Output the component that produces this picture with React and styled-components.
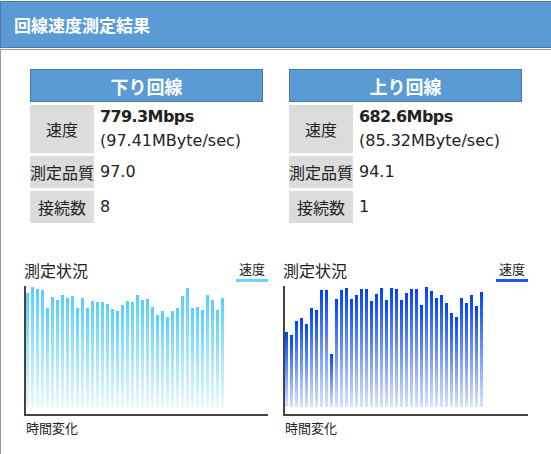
import styled, { createGlobalStyle } from 'styled-components';

const GlobalStyle = createGlobalStyle`
	html, body {
		margin: 0;
		padding: 0;
		background: #fff;
	}
	body {
		font-family: "DejaVu Sans", "Noto Sans CJK JP", sans-serif;
		color: #222;
		overflow: hidden;
	}
`;

//Header
const Header = styled.div`
	margin-top: 1px;
	height: 45px;
	display: flex;
	align-items: center;
	padding-left: 13px;
	background: #5b9bd5;
	border: 1px solid #4a78a8;
	border-right: none;
	color: #fff;
	font-family: "Noto Sans CJK JP", sans-serif;
	font-weight: 700;
	font-size: 17px;
`;

const Panel = styled.div`
	margin-top: 1px;
	border-top: 1px solid #999;
	border-left: 1px solid #999;
	padding: 19px 0 40px 23px;
	display: grid;
	grid-template-columns: 244px 245px;
	column-gap: 15px;
`;

const Column = styled.div`
	display: flex;
	flex-direction: column;
`;

//Result table
const Table = styled.div`
	margin-left: 6px;
	width: 233px;
	display: grid;
	grid-template-columns: 64px 1fr;
	grid-auto-rows: auto;
	gap: 3px;
`;

const TableHead = styled.div`
	grid-column: 1 / span 2;
	height: 31px;
	display: flex;
	justify-content: center;
	align-items: center;
	background: #5b9bd5;
	border: 1px solid #4a78a8;
	color: #fff;
	font-family: "Noto Sans CJK JP", sans-serif;
	font-weight: 700;
	font-size: 18px;
`;

const Label = styled.div`
	height: ${(p) => p.$h}px;
	display: flex;
	justify-content: center;
	align-items: center;
	background: #dcdcdc;
	font-family: "Noto Sans CJK JP", sans-serif;
	font-size: 16px;
	white-space: nowrap;
`;

const Value = styled.div`
	height: ${(p) => p.$h}px;
	display: flex;
	flex-direction: column;
	justify-content: center;
	padding-left: 3px;
	font-size: 16px;
	line-height: 24px;
	white-space: nowrap;
`;

const Strong = styled.span`
	font-weight: 700;
	letter-spacing: -0.6px;
`;

//Chart
const ChartHead = styled.div`
	margin-top: 33px;
	height: 30px;
	display: flex;
	justify-content: space-between;
	align-items: flex-start;
`;

const ChartTitle = styled.div`
	margin-top: 3px;
	font-family: "Noto Sans CJK JP", sans-serif;
	font-size: 16px;
	line-height: 22px;
`;

const Legend = styled.div`
	margin-top: 5px;
	padding: 0 3px 2px;
	border-bottom: 3px solid ${(p) => p.$color};
	font-family: "Noto Sans CJK JP", sans-serif;
	font-size: 13px;
	line-height: 16px;
`;

const Plot = styled.div`
	box-sizing: border-box;
	height: 130px;
	padding-bottom: 7px;
	border-left: 2px solid #444;
	border-bottom: 2px solid #444;
	display: flex;
	align-items: flex-end;
	gap: 2px;
`;

const Bar = styled.div`
	width: 3px;
	flex: none;
	background: linear-gradient(to bottom, ${(p) => p.$from}, ${(p) => p.$to});
`;

const AxisLabel = styled.div`
	margin-top: 4px;
	margin-left: 2px;
	font-family: "Noto Sans CJK JP", sans-serif;
	font-size: 13px;
	line-height: 16px;
`;

const BASE = 407;

const downTops = [293, 287, 289, 290, 308, 297, 300, 295, 298, 296, 308, 298, 308, 301, 302, 302, 304, 309, 311, 305,
	301, 302, 295, 300, 299, 307, 315, 311, 317, 311, 308, 296, 288, 308, 307, 310, 295, 300, 310, 298];

const upTops = [332, 335, 321, 318, 324, 308, 310, 290, 290, 354, 299, 290, 288, 299, 295, 289, 289, 301, 294, 288,
	300, 288, 289, 300, 293, 289, 289, 305, 287, 291, 298, 295, 303, 313, 317, 298, 303, 295, 306, 292];

const lines = [
	{
		title: '下り回線',
		mbps: '779.3Mbps',
		mbyte: '(97.41MByte/sec)',
		quality: '97.0',
		conns: '8',
		tops: downTops,
		legend: '#66d6fb',
		from: '#55d0fa',
		to: '#e9f9fe',
	},
	{
		title: '上り回線',
		mbps: '682.6Mbps',
		mbyte: '(85.32MByte/sec)',
		quality: '94.1',
		conns: '1',
		tops: upTops,
		legend: '#1f55f2',
		from: '#0040ff',
		to: '#d9e3ff',
	},
];

const Result = ({ line }) => (
	<Column>
		<Table>
			<TableHead>{ line.title }</TableHead>
			<Label $h={ 48 }>速度</Label>
			<Value $h={ 48 }>
				<Strong>{ line.mbps }</Strong>
				<span>{ line.mbyte }</span>
			</Value>
			<Label $h={ 32 }>測定品質</Label>
			<Value $h={ 32 }>{ line.quality }</Value>
			<Label $h={ 32 }>接続数</Label>
			<Value $h={ 32 }>{ line.conns }</Value>
		</Table>

		<ChartHead>
			<ChartTitle>測定状況</ChartTitle>
			<Legend $color={ line.legend }>速度</Legend>
		</ChartHead>

		<Plot>
			{ line.tops.map((top, i) => (
				<Bar key={ i } $from={ line.from } $to={ line.to } style={ { height: BASE - top } }/>
			)) }
		</Plot>

		<AxisLabel>時間変化</AxisLabel>
	</Column>
);

const App = () => (
	<>
		<GlobalStyle />
		<Header>回線速度測定結果</Header>
		<Panel>
			{ lines.map((line) => <Result key={ line.title } line={ line }/>) }
		</Panel>
	</>
);

export default App;
